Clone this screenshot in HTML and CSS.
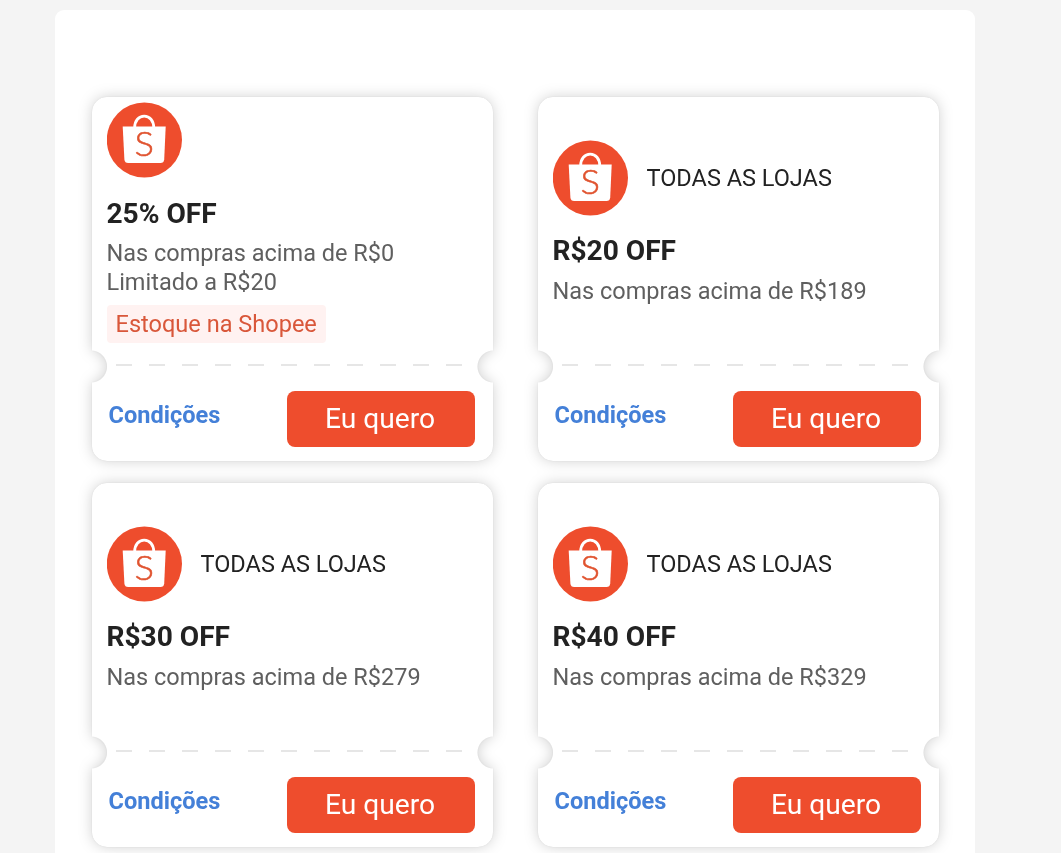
FILE: index.html
```html
<!DOCTYPE html>
<html lang="pt-BR">
<head>
  <meta charset="UTF-8">
  <meta name="viewport" content="width=device-width, initial-scale=1.0">
  <title>Cupons Shopee</title>
  <link rel="stylesheet" href="styles.css">
</head>
<body>
  <div class="panel">
    <div class="coupons">
      <!-- 25% OFF -->
      <div class="coupon coupon-full">
        <div class="coupon-info">
          <div class="store">
            <!-- Shopee bag logo, reused by the other coupons -->
            <svg class="logo" viewBox="0.6 0 76 76">
              <g id="logo">
                <circle cx="38" cy="38" r="37.6" fill="#ee4d2d"/>
                <path d="M28.2 26C28.2 18.5 32.5 14.2 37.8 14.2S47.4 18.5 47.4 26" fill="none" stroke="#fff" stroke-width="2.8"/>
                <path d="M16.3 24.6H59.3L57.8 57.5Q57.5 61 54 61H21.8Q18.3 61 18 57.5Z" fill="#fff"/>
                <text class="logo-letter" transform="translate(37.9 54) scale(1.12 1)" text-anchor="middle">S</text>
              </g>
            </svg>
          </div>
          <h2>25% OFF</h2>
          <p>Nas compras acima de R$0<br>Limitado a R$20</p>
          <span class="tag">Estoque na Shopee</span>
        </div>
        <div class="divider"></div>
        <div class="coupon-actions">
          <a href="#">Condições</a>
          <button>Eu quero</button>
        </div>
      </div>

      <!-- R$20 OFF -->
      <div class="coupon">
        <div class="coupon-info">
          <div class="store">
            <svg class="logo" viewBox="0.6 0 76 76"><use href="#logo"/></svg>
            <span class="store-name">TODAS AS LOJAS</span>
          </div>
          <h2>R$20 OFF</h2>
          <p>Nas compras acima de R$189</p>
        </div>
        <div class="divider"></div>
        <div class="coupon-actions">
          <a href="#">Condições</a>
          <button>Eu quero</button>
        </div>
      </div>

      <!-- R$30 OFF -->
      <div class="coupon">
        <div class="coupon-info">
          <div class="store">
            <svg class="logo" viewBox="0.6 0 76 76"><use href="#logo"/></svg>
            <span class="store-name">TODAS AS LOJAS</span>
          </div>
          <h2>R$30 OFF</h2>
          <p>Nas compras acima de R$279</p>
        </div>
        <div class="divider"></div>
        <div class="coupon-actions">
          <a href="#">Condições</a>
          <button>Eu quero</button>
        </div>
      </div>

      <!-- R$40 OFF -->
      <div class="coupon">
        <div class="coupon-info">
          <div class="store">
            <svg class="logo" viewBox="0.6 0 76 76"><use href="#logo"/></svg>
            <span class="store-name">TODAS AS LOJAS</span>
          </div>
          <h2>R$40 OFF</h2>
          <p>Nas compras acima de R$329</p>
        </div>
        <div class="divider"></div>
        <div class="coupon-actions">
          <a href="#">Condições</a>
          <button>Eu quero</button>
        </div>
      </div>
    </div>
  </div>
</body>
</html>
```
FILE: styles.css
```css
/* General Styling */
* {
  box-sizing: border-box;
}

body {
  margin: 0;
  padding-top: 9.5px;
  height: 100vh;
  overflow: hidden;
  font-family: Roboto, Arial, sans-serif;
  background-color: #f4f4f4;
  color: #222;
}

.panel {
  width: 920px;
  height: 100%;
  margin-left: 55px;
  padding: 87.5px 36px 0 37px;
  border-radius: 9px 9px 0 0;
  background-color: #fff;
}

/* One shadow for the whole grid, so it also follows the notches */
.coupons {
  display: grid;
  grid-template-columns: 401px 401px;
  gap: 22px 45px;
  filter: drop-shadow(0 0 1px rgba(0, 0, 0, 0.06)) drop-shadow(0 0 7px rgba(0, 0, 0, 0.18));
}

/* Coupon */
.coupon {
  display: flex;
  flex-direction: column;
  height: 364px;
  padding: 0 18px 14px 14.5px;
  border-radius: 15px;
  background-color: #fff;
  /* Round notches at both ends of the dashed line */
  -webkit-mask:
    radial-gradient(circle at -1px 269.5px, transparent 15.5px, #000 16.5px) left / 51% 100% no-repeat,
    radial-gradient(circle at 100% 269.5px, transparent 15.5px, #000 16.5px) right / 51% 100% no-repeat;
  mask:
    radial-gradient(circle at -1px 269.5px, transparent 15.5px, #000 16.5px) left / 51% 100% no-repeat,
    radial-gradient(circle at 100% 269.5px, transparent 15.5px, #000 16.5px) right / 51% 100% no-repeat;
}

.coupon-info {
  height: 251px;
  display: flex;
  flex-direction: column;
  justify-content: center;
  align-items: flex-start;
}

.store {
  display: flex;
  align-items: center;
  gap: 18px;
}

.logo {
  width: 76px;
  height: 76px;
}

.logo-letter {
  font-family: Lato, sans-serif;
  font-size: 32.5px;
  font-weight: 300;
  fill: #e0532f;
  stroke: #e0532f;
  stroke-width: 0.5px;
}

.store-name {
  font-size: 23.5px;
}

.coupon h2 {
  margin: 18px 0 9px;
  font-size: 28.1px;
  line-height: 34px;
  font-weight: bold;
}

.coupon p {
  margin: 0;
  font-size: 23.5px;
  line-height: 29px;
  color: #5f5f5f;
}

/* The coupon with the tag fills the whole height */
.coupon-full h2 {
  margin: 18.5px 0 8px;
}

.tag {
  margin-top: 8px;
  padding: 0 9px;
  border-radius: 4px;
  background-color: #fff2f1;
  color: #d9573a;
  font-size: 23.55px;
  line-height: 38px;
}

/* Dashed line */
.divider {
  width: 346px;
  height: 2px;
  margin: 16px 0 0 9.5px;
  background: repeating-linear-gradient(90deg, #e6e6e6 0 16px, transparent 16px 33px);
}

/* Bottom row */
.coupon-actions {
  display: flex;
  justify-content: space-between;
  align-items: flex-start;
  margin-top: 25px;
  padding-left: 2px;
}

.coupon-actions a {
  margin-top: 9.5px;
  color: #4480d8;
  font-size: 23.55px;
  line-height: 29px;
  font-weight: bold;
  text-decoration: none;
}

.coupon-actions button {
  width: 188px;
  height: 56px;
  padding: 0 2px 2px 0;
  border: none;
  border-radius: 8px;
  background-color: #ee4d2d;
  color: #fff;
  font-family: inherit;
  font-size: 28.2px;
  cursor: pointer;
}
```
